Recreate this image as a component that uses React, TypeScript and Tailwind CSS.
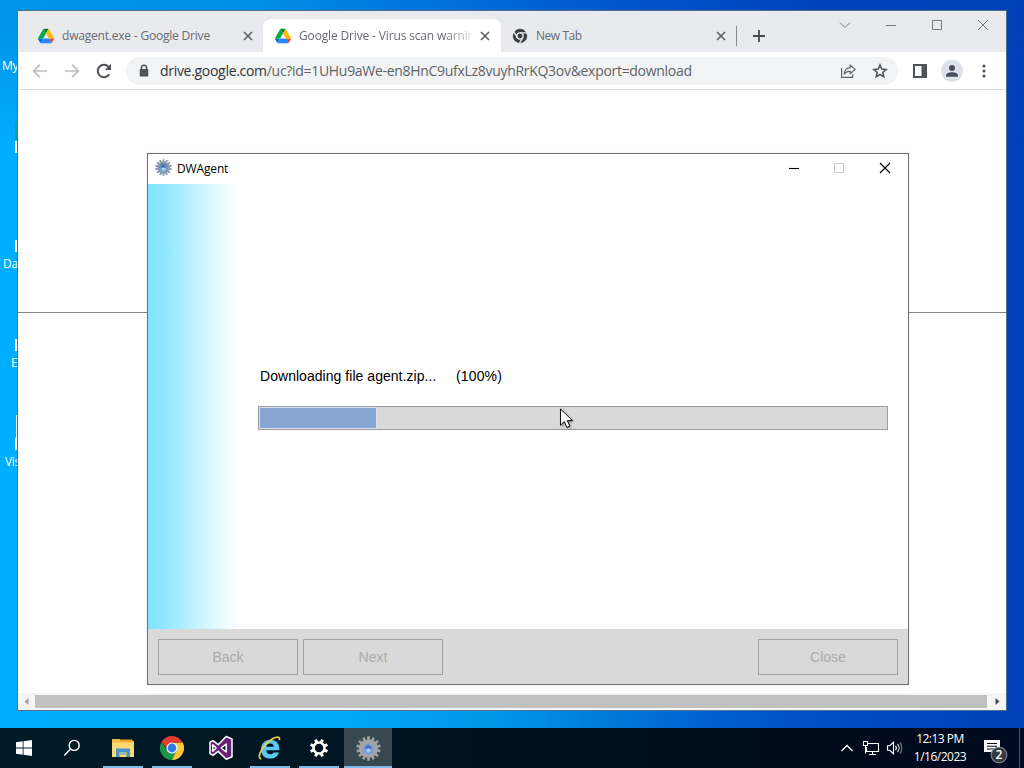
import React from "react";

const DriveIcon = () => (
  <svg width="16" height="16" viewBox="0 0 87.3 78" className="block shrink-0">
    <path d="m6.6 66.85 3.85 6.65c.8 1.4 1.95 2.5 3.3 3.3l13.75-23.8h-27.5c0 1.55.4 3.1 1.2 4.5z" fill="#0066da" />
    <path d="m43.65 25-13.75-23.8c-1.35.8-2.5 1.9-3.3 3.3l-25.4 44a9.06 9.06 0 0 0 -1.2 4.5h27.5z" fill="#00ac47" />
    <path d="m73.55 76.8c1.35-.8 2.5-1.9 3.3-3.3l1.6-2.75 7.65-13.25c.8-1.4 1.2-2.95 1.2-4.5h-27.502l5.852 11.5z" fill="#ea4335" />
    <path d="m43.65 25 13.75-23.8c-1.35-.8-2.9-1.2-4.5-1.2h-18.5c-1.6 0-3.15.45-4.5 1.2z" fill="#00832d" />
    <path d="m59.8 53h-32.3l-13.75 23.8c1.35.8 2.9 1.2 4.5 1.2h50.8c1.6 0 3.15-.45 4.5-1.2z" fill="#2684fc" />
    <path d="m73.4 26.5-12.7-22c-.8-1.4-1.95-2.5-3.3-3.3l-13.75 23.8 16.15 28h27.45c0-1.55-.4-3.1-1.2-4.5z" fill="#ffba00" />
  </svg>
);

const CloseX = () => (
  <svg width="16" height="16" viewBox="0 0 16 16" className="block shrink-0" stroke="#5c6064" strokeWidth="1.6">
    <path d="M4 4l8 8M12 4l-8 8" />
  </svg>
);

const ChromeMono = () => (
  <svg width="16" height="16" viewBox="0 0 16 16" className="block shrink-0">
    <circle cx="8" cy="8" r="7.2" fill="#3c4043" />
    <circle cx="8" cy="8" r="3.1" fill="none" stroke="#e8eaed" strokeWidth="1.3" />
    <path d="M8 4.8h7M5.2 9.6L1.9 3.8M10.8 9.6l-3.4 5.8" stroke="#e8eaed" strokeWidth="1.3" />
  </svg>
);

const gearTeeth = Array.from({ length: 14 }, (_, i) => (i * 360) / 14);

const AgentGear = ({ size, dim }: { size: number; dim?: boolean }) => (
  <svg width={size} height={size} viewBox="0 0 24 24" className="block shrink-0">
    <defs>
      <radialGradient id={dim ? "coreDim" : "core"} cx="50%" cy="65%" r="60%">
        <stop offset="0" stopColor={dim ? "#c4e4ff" : "#d0f1ff"} />
        <stop offset="0.45" stopColor={dim ? "#6f9de0" : "#70b4e4"} />
        <stop offset="1" stopColor={dim ? "#8fa2c4" : "#5a78a6"} />
      </radialGradient>
    </defs>
    {gearTeeth.map((a) => (
      <rect key={a} x="10.7" y="0.3" width="2.6" height="5" rx="0.5" fill={dim ? "#a2a19e" : "#8e98a8"} transform={`rotate(${a} 12 12)`} />
    ))}
    <circle cx="12" cy="12" r="9" fill={dim ? "#a0a3a8" : "#929cae"} />
    <circle cx="12" cy="12" r={dim ? 5.4 : 6} fill={dim ? "url(#coreDim)" : "url(#core)"} />
    <path d="M8 11.5l2-1.8 1.5-1.8 1.7 1.5 2.5 2.2-2 .8-1.8-.8-2 .9z" fill={dim ? "#4a70c4" : "#3562a8"} />
  </svg>
);

const ChromeLogo = () => (
  <svg width="24" height="24" viewBox="0 0 24 24" className="block">
    <path d="M12 12L22.4 6A12 12 0 0 1 12 24z" fill="#fcc934" />
    <path d="M12 6.4h10.6L17 15z" fill="#fcc934" />
    <path d="M1.6 6A12 12 0 0 1 22.6 6.4H12L7.2 9.2 6 12z" fill="#e33b2e" />
    <path d="M16.8 14.8L12 24A12 12 0 0 1 1.6 6l5.6 8.8z" fill="#1e9447" />
    <circle cx="12" cy="12" r="5.6" fill="#fff" />
    <circle cx="12" cy="12" r="4.4" fill="#3478e5" />
  </svg>
);

const StudioLogo = () => (
  <svg width="26" height="26" viewBox="0 0 26 26" className="block">
    <path fillRule="evenodd" d="M18.2 1.5L24 4v17.7l-5.8 2.5-8-7.8-5.2 4L2 18.7V7.1l3-1.4 5.2 4zM4.8 9.7v6.5L8.1 13zM13.2 13l5 4V9z" fill="#68217a" stroke="#fff" strokeWidth="1.5" strokeLinejoin="round" />
  </svg>
);

const ExplorerE = () => (
  <svg width="26" height="26" viewBox="0 0 26 26" className="-ml-0.5 block">
    <path d="M23.4 15.2H10.3c.2 2.5 1.7 4 4.1 4 1.6 0 2.6-.6 3.2-1.8h5.3c-1.2 4-4.3 6.2-8.6 6.2-5.5 0-9.3-3.5-9.3-9.1 0-5.8 3.9-9.7 9.4-9.7 5.8 0 9.2 4 9 10.4zM10.4 11.7h7.4c-.2-2-1.6-3.2-3.6-3.2-2.1 0-3.4 1.2-3.8 3.2z" fill="#5bc8f2" />
    <path d="M4.5 23.8C2 22.2 3.8 16 9 10.2 14.2 4.4 20.5.7 23 2.7c.5.4.6 1 .5 1.8" fill="none" stroke="#f0cf35" strokeWidth="1.7" strokeLinecap="round" />
  </svg>
);

const SettingsGear = () => (
  <svg width="20" height="20" viewBox="0 0 20 20" className="block">
    {[22.5, 67.5, 112.5, 157.5, 202.5, 247.5, 292.5, 337.5].map((a) => (
      <rect key={a} x="8.5" y="0.9" width="3" height="4" fill="#fff" transform={`rotate(${a} 10 10)`} />
    ))}
    <circle cx="10" cy="10" r="5.5" fill="none" stroke="#fff" strokeWidth="2.6" />
  </svg>
);

const TaskButton = ({ children, open, active }: { children: React.ReactNode; open?: boolean; active?: boolean }) => (
  <div className={active ? "flex h-10 w-12 shrink-0 flex-col bg-[#374850]" : "flex h-10 w-12 shrink-0 flex-col"}>
    <div className="flex h-[38px] items-center justify-center pt-0.5">{children}</div>
    <div className={active ? "h-0.5 w-12 bg-[#7fb9e6]" : open ? "mx-1 h-0.5 bg-[#7fb9e6]" : "h-0.5"} />
  </div>
);

const DesktopIcons = () => (
  <div className="absolute left-0 top-0 h-[728px] w-[30px] whitespace-nowrap text-[12px] leading-4 text-white">
    <span className="absolute left-[2px] top-[58px] tracking-[-0.3px]">My</span>
    <span className="absolute left-[15px] top-[122px] h-5 w-1 bg-[#159a8c] opacity-70" />
    <span className="absolute left-[15px] top-[141px] h-3 w-1 bg-white" />
    <span className="absolute left-[15px] top-[240px] h-3 w-1 bg-white" />
    <span className="absolute left-[3px] top-[256px] tracking-[-0.3px]">Da</span>
    <span className="absolute left-[15px] top-[339px] h-3 w-1 bg-white" />
    <span className="absolute left-[11px] top-[355px]">E</span>
    <span className="absolute left-[16px] top-[415px] h-[23px] w-1 bg-[#dceefa]" />
    <span className="absolute left-[15px] top-[438px] h-3 w-1 bg-white" />
    <span className="absolute left-[5px] top-[454px] tracking-[-0.4px]">Vis</span>
  </div>
);

const TabStrip = () => (
  <div className="flex h-[41px] bg-[#e8eaed] pt-2 text-[12px] text-[#676b70]">
    <div className="flex h-[33px] w-[244px] items-center rounded-br-lg pl-[19px]">
      <DriveIcon />
      <span className="ml-2 w-[178px] whitespace-nowrap tracking-[-0.2px]">dwagent.exe - Google Drive</span>
      <CloseX />
    </div>
    <div className="flex h-[33px] w-[238px] items-center rounded-t-lg bg-white pl-3">
      <DriveIcon />
      <span className="ml-2 w-[172px] whitespace-nowrap tracking-[-0.15px] [mask-image:linear-gradient(to_right,black_145px,transparent_180px)]">Google Drive - Virus scan warnin</span>
      <span className="ml-1.5"><CloseX /></span>
    </div>
    <div className="flex h-[33px] w-[235px] items-center border-r border-transparent pl-[11px]">
      <ChromeMono />
      <span className="ml-2 w-[177px] whitespace-nowrap tracking-[-0.45px]">New Tab</span>
      <CloseX />
    </div>
    <div className="mt-[7px] h-5 w-px bg-[#85898d]" />
    <svg width="16" height="16" viewBox="0 0 16 16" className="ml-3.5 mt-[9px] shrink-0" stroke="#45494d" strokeWidth="1.8"><path d="M8 2v12M2 8h12" /></svg>
    <div className="-mt-2 ml-[55px] flex h-7 text-[#777a7e]">
      {["M3 5.5l5 5 5-5", "M3 8.5h10", "M3.5 3.5h9v9h-9z", "M3 3l10 10M13 3L3 13"].map((d) => (
        <div key={d} className="flex w-[46px] justify-center pt-1.5">
          <svg width="16" height="16" viewBox="0 0 16 16" fill="none" stroke="currentColor" strokeWidth="1"><path d={d} /></svg>
        </div>
      ))}
    </div>
  </div>
);

const Toolbar = () => (
  <div className="flex h-[38px] items-center border-b border-[#d7d9dc] bg-white pl-[13px]">
    <svg width="16" height="16" viewBox="0 0 16 16" fill="none" stroke="#bcbec1" strokeWidth="1.7"><path d="M15 8H2M8 1.6L1.6 8 8 14.4" /></svg>
    <svg width="16" height="16" viewBox="0 0 16 16" className="ml-4" fill="none" stroke="#bcbec1" strokeWidth="1.7"><path d="M1 8h13M8 1.6L14.4 8 8 14.4" /></svg>
    <svg width="16" height="16" viewBox="0 0 16 16" className="ml-4" fill="none" stroke="#505357" strokeWidth="2"><path d="M13.3 11.2A6.2 6.2 0 1 1 12.6 3.8" /><path d="M15 .8v6.2H8.8z" fill="#505357" stroke="none" /></svg>
    <div className="ml-3.5 flex h-7 w-[772px] items-center rounded-full bg-[#f1f3f4] pl-3">
      <svg width="12" height="14" viewBox="0 0 12 14"><path d="M3.5 6V3.8a2.5 2.5 0 0 1 5 0V6" fill="none" stroke="#505357" strokeWidth="1.5" /><rect x="1.7" y="5" width="8.6" height="7.4" rx="0.8" fill="#505357" /></svg>
      <span className="ml-2.5 w-[680px] whitespace-nowrap text-[14px] tracking-[-0.3px] text-[#5f6368]"><span className="text-[#303235]">drive.google.com</span>/uc?id=1UHu9aWe-en8HnC9ufxLz8vuyhRrKQ3ov&amp;export=download</span>
      <svg width="16" height="16" viewBox="0 0 16 16" fill="none" stroke="#5f6368" strokeWidth="1.2" className="shrink-0"><path d="M1.6 5v9.4h11V11.2" /><path d="M4.2 10.8c.4-4 2.4-5.9 6-6.2V2l4.9 4.4-4.9 4.3V8.1c-2.6 0-4.3.8-6 2.7z" strokeLinejoin="round" /></svg>
      <svg width="16" height="16" viewBox="0 0 16 16" fill="none" stroke="#505357" strokeWidth="1.5" className="ml-4 shrink-0"><path d="M8 2l1.7 4.1 4.5.4-3.4 2.9 1 4.4L8 11.5l-3.8 2.3 1-4.4-3.4-2.9 4.5-.4z" /></svg>
    </div>
    <svg width="16" height="16" viewBox="0 0 16 16" className="ml-3.5"><path fillRule="evenodd" d="M1 1h14v14H1zM3 3v10h6.5V3z" fill="#505357" /></svg>
    <div className="ml-[13px] flex h-[22px] w-[22px] items-center justify-center rounded-full bg-[#dde1e9]">
      <svg width="14" height="14" viewBox="0 0 14 14" fill="#46505f"><circle cx="7" cy="4" r="3" /><path d="M1 12.8v-1.3C1 9.3 4.4 8.2 7 8.2s6 1.1 6 3.3v1.3z" /></svg>
    </div>
    <svg width="4" height="16" viewBox="0 0 4 16" className="ml-[19px]" fill="#505357"><circle cx="2" cy="3" r="1.6" /><circle cx="2" cy="8" r="1.6" /><circle cx="2" cy="13" r="1.6" /></svg>
  </div>
);

const Browser = () => (
  <div className="absolute left-[17px] top-[10px] flex h-[701px] w-[990px] flex-col border border-[#4e6f91] bg-white">
    <div className="flex flex-col border-l border-[#eceef0]">
      <TabStrip />
      <Toolbar />
    </div>
    <div className="flex h-[603px] flex-col"><div className="mt-[222px] h-px bg-[#858585]" /></div>
    <div className="flex h-[17px] items-center bg-[#f5f5f5]">
      <svg width="17" height="15" viewBox="0 0 17 15"><path d="M10.5 4v7l-4-3.5z" fill="#a0a0a0" /></svg>
      <div className="h-[13px] w-[952px] bg-[#c0c0c0]" />
      <svg width="19" height="15" viewBox="0 0 19 15"><path d="M8.5 4v7l4-3.5z" fill="#4c4c4c" /></svg>
    </div>
  </div>
);

const AgentButton = ({ children }: { children: string }) => (
  <button className="flex h-9 w-[140px] items-center justify-center border border-[#a0a0a0] pt-0.5 font-['Liberation_Sans',Arial,sans-serif] text-[14px] text-[#aaa]">{children}</button>
);

const AgentDialog = () => (
  <div className="absolute left-[147px] top-[153px] flex h-[532px] w-[762px] flex-col border border-[#6e6e6e] bg-white shadow-[0_1px_5px_rgba(0,0,0,0.06)]">
    <div className="flex h-[30px] shrink-0 items-center pl-[7px] text-[12px] text-black">
      <div className="-mt-[3px]"><AgentGear size={17} /></div>
      <span className="ml-[5px] w-[594px] tracking-[-0.15px]">DWAgent</span>
      <div className="-mt-0.5 flex">
        {[["M3 8.5h10", "#000"], ["M3.5 3.5h9v9h-9z", "#d0d0d0"], ["M3 3l10 10M13 3L3 13", "#000"]].map(([d, c]) => (
          <div key={d} className="flex w-[45.5px] shrink-0 justify-center">
            <svg width="16" height="16" viewBox="0 0 16 16" fill="none" stroke={c} strokeWidth="1.1"><path d={d} /></svg>
          </div>
        ))}
      </div>
    </div>
    <div className="flex h-[445px] shrink-0">
      <div className="w-[92px] bg-[linear-gradient(to_right,#80e4ff_0%,#92e8ff_20%,#bff2ff_50%,#e4f9ff_75%,#fff_100%)]" />
      <div className="flex w-[668px] flex-col pl-[18px] pt-[184px]">
        <div className="flex pl-0.5 font-['Liberation_Sans',Arial,sans-serif] text-[14px] leading-4 tracking-[0.04px] text-black">
          <span className="w-[196px] whitespace-nowrap">Downloading file agent.zip...</span>
          <span className="tracking-[0.15px]">(100%)</span>
        </div>
        <div className="mt-[22px] flex h-6 w-[630px] border border-[#9c9c9c] bg-[#d9d9d9]">
          <div className="w-[118px] border border-[#d5e0ee] bg-[#86a5d3]" />
        </div>
      </div>
    </div>
    <div className="flex h-[55px] shrink-0 items-center bg-[#d9d9d9] px-[10px]">
      <AgentButton>Back</AgentButton>
      <div className="ml-[5px]"><AgentButton>Next</AgentButton></div>
      <div className="ml-auto"><AgentButton>Close</AgentButton></div>
    </div>
  </div>
);

const Taskbar = () => (
  <div className="absolute left-0 top-[728px] flex h-10 w-[1024px] bg-[linear-gradient(to_right,#001b28_0%,#001420_40%,#000c1b_75%,#000a20_100%)] text-white">
    <TaskButton>
      <svg width="16" height="16" viewBox="0 0 16 16" fill="#fff"><path d="M0 2.2L6.7 1.3v6.3H0zM7.5 1.2L16 0v7.6H7.5zM0 8.4h6.7v6.3L0 13.8zM7.5 8.4H16V16l-8.5-1.2z" /></svg>
    </TaskButton>
    <TaskButton>
      <svg width="18" height="18" viewBox="0 0 18 18" fill="none" stroke="#fff" strokeWidth="1.4"><circle cx="11.2" cy="6.4" r="5" /><path d="M7.6 10.1L1.2 16.6" /></svg>
    </TaskButton>
    <div className="ml-[3px] flex gap-px">
      <TaskButton open>
        <svg width="22" height="20" viewBox="0 0 22 20"><path d="M0 1h8l1.5 2H22v16H0z" fill="#efb73c" /><path d="M0 4.5h22V19H0z" fill="#fbd975" /><path d="M8.5 1.5h12v2h-12z" fill="#e9a526" /><path d="M4 10.5h14V19h-3.5v-4.5h-7V19H4z" fill="#4795c8" /><path d="M7.5 14.5h7V17h-7z" fill="#a5b99a" /></svg>
      </TaskButton>
      <TaskButton open><ChromeLogo /></TaskButton>
      <TaskButton><StudioLogo /></TaskButton>
      <TaskButton open><ExplorerE /></TaskButton>
      <TaskButton open><SettingsGear /></TaskButton>
      <TaskButton active><AgentGear size={25} dim /></TaskButton>
    </div>
    <div className="ml-auto flex items-center">
      <svg width="14" height="10" viewBox="0 0 14 10" fill="none" stroke="#fff" strokeWidth="1.3"><path d="M1.5 8L7 2.5 12.5 8" /></svg>
      <svg width="18" height="16" viewBox="0 0 18 16" className="ml-2" fill="none" stroke="#fff" strokeWidth="1.1"><path d="M6 3.5h10.5v8H4.5V7M1.5 1.5h4v4h-4zM3.5 5.5v8M10.5 11.5v3M7 14.5h7" /></svg>
      <svg width="18" height="16" viewBox="0 0 18 16" className="ml-1.5" fill="none" stroke="#fff" strokeWidth="1.1"><path d="M1.5 5.7h2.3L7.5 2.3v11.4L3.8 10.3H1.5z" /><path d="M9.5 5.8a3.5 3.5 0 0 1 0 4.4M11.5 4a6 6 0 0 1 0 8" /><path d="M13.8 2.5a8.5 8.5 0 0 1 0 11" stroke="#7d858e" /></svg>
      <div className="-mt-0.5 ml-1.5 flex w-[60px] flex-col items-center whitespace-nowrap pt-0.5 text-[12px] leading-[18px] tracking-[-0.5px]"><span>12:13 PM</span><span>1/16/2023</span></div>
      <div className="relative ml-[13px] h-10 w-[25px]">
        <svg width="25" height="26" viewBox="0 0 25 26" className="mt-[11px]"><path d="M1 1h16v12H12v4l-4-4H1z" fill="#fff" /><path d="M4 4.5h10M4 7.2h10M4 10h7" stroke="#000d1b" strokeWidth="1.1" /><circle cx="16" cy="16" r="7.8" fill="#343940" stroke="#828890" strokeWidth="1.1" /></svg>
        <span className="absolute left-[8px] top-[19px] w-4 text-center text-[12px] font-semibold leading-4">2</span>
      </div>
      <div className="ml-[11px] mr-1 h-10 w-px bg-[#4b5361]" />
    </div>
  </div>
);

export default function App() {
  return (
    <div className="relative h-[768px] w-[1024px] overflow-hidden bg-[linear-gradient(to_right,#00aeff_0%,#00abf6_30%,#0098e8_48%,#006bd4_65%,#0050c5_78%,#0040b7_100%)] font-['Open_Sans','Noto_Sans',sans-serif]">
      <div className="absolute left-0 top-0 h-[150px] w-[1024px] bg-[linear-gradient(to_right,#0096e9_0%,#008fe7_25%,#0073dc_42%,#0055cc_60%,#0043bb_80%,#0040b7_100%)] [mask-image:linear-gradient(to_bottom,black_20%,transparent)]" />
      <DesktopIcons />
      <Browser />
      <AgentDialog />
      <Taskbar />
      <svg width="16" height="24" viewBox="0 0 16 24" className="absolute left-[559px] top-[407px] drop-shadow-[1px_1px_1px_rgba(0,0,0,0.4)]"><path d="M1.5 2v16.2l3.8-3.6 2.5 5.8 3-1.3-2.5-5.6h5.1z" fill="#fff" stroke="#111" /></svg>
    </div>
  );
}
